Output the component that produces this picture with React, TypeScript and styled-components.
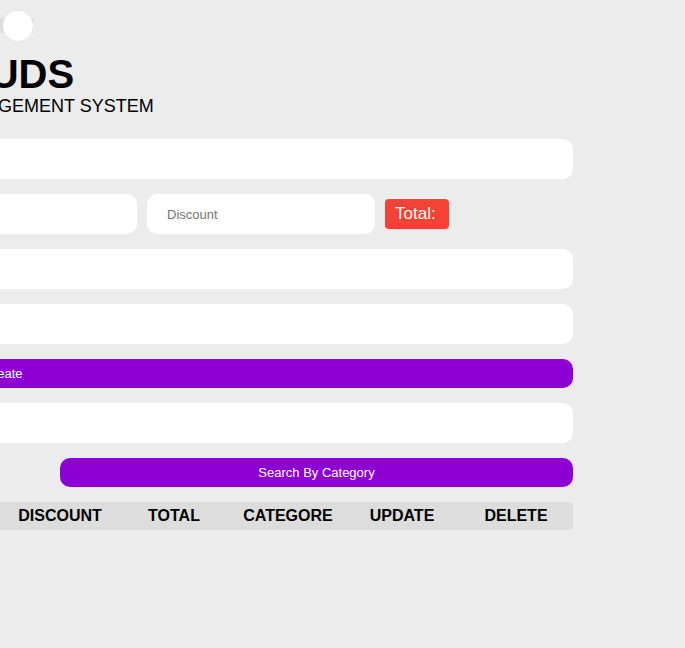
import React from "react";
import styled, { createGlobalStyle } from "styled-components";

const Global = createGlobalStyle`
  html, body {
    margin: 0;
    padding: 0;
    background: #ececec;
    font-family: "Liberation Sans", Arial, sans-serif;
    overflow-x: hidden;
  }
  * { box-sizing: border-box; }
`;

const ThemeToggle = styled.div`
  position: fixed;
  top: 11px;
  left: -27px;
  width: 60px;
  height: 30px;
`;

const Track = styled.span`
  position: absolute;
  left: 0;
  right: 0;
  top: 7px;
  height: 15px;
  background: #dddddd;
`;

const Knob = styled.span`
  position: absolute;
  right: 0;
  top: 0;
  width: 30px;
  height: 30px;
  border-radius: 50%;
  background: #ffffff;
`;

const Page = styled.div`
  width: 1140px;
  margin-left: -567px;
  padding-top: 54px;
  display: flex;
  flex-direction: column;
`;

const Head = styled.header`
  text-align: center;
  margin-bottom: 24px;
`;

const Title = styled.h1`
  margin: 0;
  font-size: 40px;
  line-height: 40px;
  font-weight: 700;
  color: #000;
`;

const Subtitle = styled.h2`
  margin: 3px 0 0;
  font-size: 18px;
  line-height: 18px;
  font-weight: 400;
  color: #000;
`;

const Form = styled.div`
  display: flex;
  flex-direction: column;
  gap: 15px;
`;

const Row = styled.div`
  display: flex;
  align-items: center;
  gap: 10px;
`;

const Input = styled.input<{ $w?: string }>`
  width: ${(p) => p.$w ?? "100%"};
  height: 40px;
  border: none;
  outline: none;
  border-radius: 10px;
  background: #ffffff;
  padding: 0 20px;
  font-family: "Liberation Sans", Arial, sans-serif;
  font-size: 13px;
  color: #333;
  &::placeholder { color: #757575; }
`;

const Total = styled.small`
  height: 30px;
  display: inline-flex;
  align-items: center;
  padding: 0 13px 0 10px;
  background: #f44336;
  border-radius: 4px;
  color: #ffffff;
  font-size: 17px;
`;

const Button = styled.button<{ $w?: string }>`
  width: ${(p) => p.$w ?? "100%"};
  height: 29px;
  border: none;
  border-radius: 10px;
  background: #8d00d3;
  color: #ffffff;
  font-family: "Liberation Sans", Arial, sans-serif;
  font-size: 13px;
  cursor: pointer;
`;

const SearchRow = styled.div`
  display: flex;
  justify-content: space-between;
`;

const Table = styled.div`
  margin-top: 15px;
`;

const HeadRow = styled.div`
  display: grid;
  grid-template-columns: repeat(10, 1fr);
  height: 28px;
  align-items: center;
  background: #dddddd;
  border-radius: 4px;
`;

const Th = styled.div`
  text-align: center;
  font-weight: 700;
  font-size: 16px;
  color: #000;
`;

const columns = ["ID", "TITLE", "PRICE", "TAXES", "ADS", "DISCOUNT", "TOTAL", "CATEGORE", "UPDATE", "DELETE"];

export default function App() {
  return (
    <>
      <Global />
      <ThemeToggle>
        <Track />
        <Knob />
      </ThemeToggle>
      <Page>
        <Head>
          <Title>CRUDS</Title>
          <Subtitle>PRODUCT MANAGEMENT SYSTEM</Subtitle>
        </Head>
        <Form>
          <Input placeholder="Title" />
          <Row>
            <Input $w="228px" placeholder="Price" />
            <Input $w="228px" placeholder="Taxes" />
            <Input $w="228px" placeholder="Ads" />
            <Input $w="228px" placeholder="Discount" />
            <Total>Total:</Total>
          </Row>
          <Input placeholder="Count" />
          <Input placeholder="Category" />
          <Button>Create</Button>
          <Input placeholder="Search" />
          <SearchRow>
            <Button $w="45%">Search By Title</Button>
            <Button $w="45%">Search By Category</Button>
          </SearchRow>
        </Form>
        <Table>
          <HeadRow>
            {columns.map((c) => (
              <Th key={c}>{c}</Th>
            ))}
          </HeadRow>
        </Table>
      </Page>
    </>
  );
}
